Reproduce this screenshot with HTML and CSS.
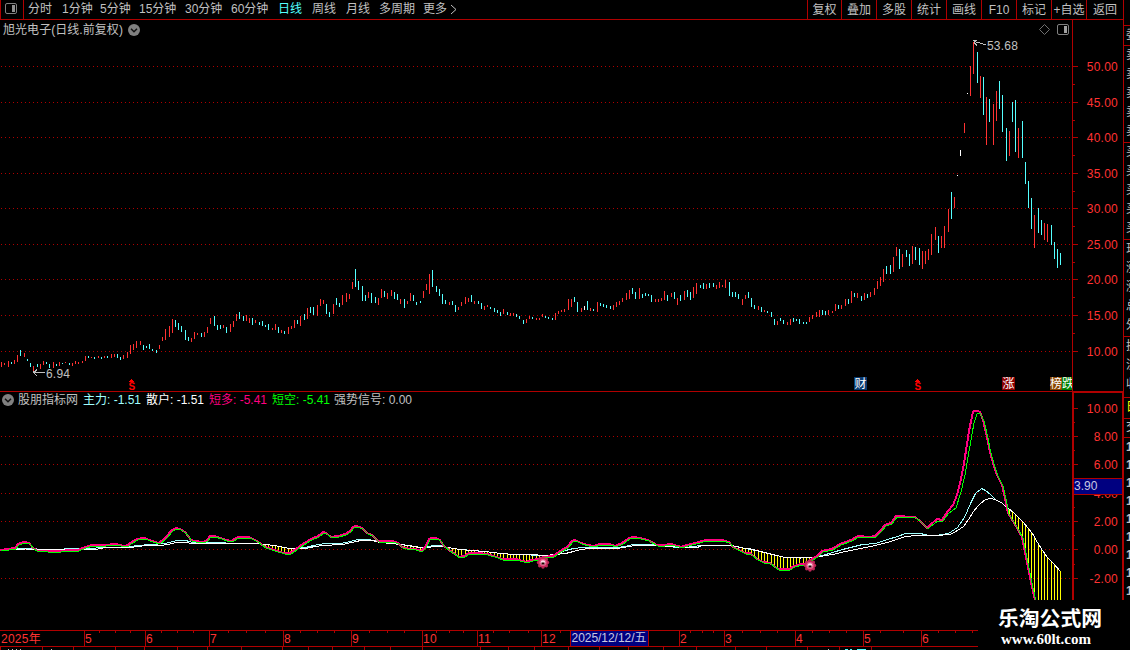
FILE: index.html
```html
<!DOCTYPE html>
<html lang="zh-CN">
<head>
  <meta charset="UTF-8">
  <title>旭光电子 日线</title>
  <link rel="stylesheet" href="styles.css">
</head>
<body>
  <header class="toolbar">
    <div class="panel-btn">
      <svg width="12" height="12" viewBox="0 0 12 12">
        <rect x="0.5" y="0.5" width="11" height="10" rx="1.5" fill="none" stroke="#808080"/>
        <rect x="7" y="2" width="3" height="7" fill="#909090"/>
      </svg>
    </div>
    <nav class="periods">
      <span>分时</span>
      <span>1分钟</span>
      <span>5分钟</span>
      <span>15分钟</span>
      <span>30分钟</span>
      <span>60分钟</span>
      <span class="active">日线</span>
      <span>周线</span>
      <span>月线</span>
      <span>多周期</span>
      <span>更多</span>
      <svg width="7" height="11" viewBox="0 0 7 11"><path d="M1 1l5 4.5-5 4.5" fill="none" stroke="#c0c0c0"/></svg>
    </nav>
    <div class="tools">
      <span>复权</span>
      <span>叠加</span>
      <span>多股</span>
      <span>统计</span>
      <span>画线</span>
      <span>F10</span>
      <span>标记</span>
      <span>+自选</span>
      <span>返回</span>
    </div>
  </header>

  <main class="workspace">
    <section class="charts">
      <div class="pane price">
        <div class="pane-head">
          <span class="stock">旭光电子(日线.前复权)</span>
          <svg class="drop" width="12" height="12" viewBox="0 0 12 12">
            <circle cx="6" cy="6" r="6" fill="#808080"/>
            <path d="M3 4.8l3 3 3-3" fill="none" stroke="#111" stroke-width="1.5"/>
          </svg>
          <svg class="corner" width="31" height="12" viewBox="0 0 31 12">
            <path d="M5.5 0.5l5 5-5 5-5-5z" fill="none" stroke="#707070"/>
            <rect x="18.5" y="0.5" width="11" height="10" rx="1.5" fill="none" stroke="#808080"/>
            <rect x="25" y="2" width="3" height="7" fill="#a0a0a0"/>
          </svg>
        </div>
        <svg class="plot" width="1072" height="351" viewBox="0 40 1072 351">
          <g id="priceGrid" class="grid"></g>
          <g id="candles"></g>
          <path class="arrow" d="M34 372.5H45M37 369.5l-3.5 3 3.5 3.5M33 371.5h3"/>
          <text class="note" x="46" y="378">6.94</text>
          <path class="arrow" d="M974 41.5l6 1.5 6 2M973 40.5h4M974 42l3 4"/>
          <text class="note" x="987" y="50">53.68</text>
          <g class="cash">
            <path d="M129 382l2.5-3 2.5 3z"/><text x="128.5" y="390">S</text>
            <path d="M915 382l2.5-3 2.5 3z"/><text x="914.5" y="390">S</text>
          </g>
          <g class="badge">
            <rect x="854" y="377" width="13" height="13" fill="#083a70"/><text x="854.5" y="388">财</text>
            <rect x="1002" y="377" width="13" height="13" fill="#8b0000"/><text x="1002.5" y="388">涨</text>
            <rect x="1050" y="377" width="12" height="13" fill="#8b4500"/><text x="1050" y="388">榜</text>
            <rect x="1062" y="377" width="10" height="13" fill="#008000"/><text x="1062" y="388">跌</text>
          </g>
        </svg>
      </div>

      <div class="pane indicator">
        <div class="pane-head">
          <svg class="drop" width="12" height="12" viewBox="0 0 12 12">
            <circle cx="6" cy="6" r="6" fill="#808080"/>
            <path d="M3 4.8l3 3 3-3" fill="none" stroke="#111" stroke-width="1.5"/>
          </svg>
          <span class="name">股朋指标网</span>
          <span class="val main">主力: -1.51</span>
          <span class="val retail">散户: -1.51</span>
          <span class="val long">短多: -5.41</span>
          <span class="val short">短空: -5.41</span>
          <span class="val signal">强势信号: 0.00</span>
        </div>
        <svg class="plot" width="1072" height="222" viewBox="0 408 1072 222">
          <defs>
            <g id="flower">
              <g fill="#c02858">
                <circle r="5"/>
                <circle cy="-4.5" r="1.7"/><circle cy="4.5" r="1.7"/>
                <circle cx="-4.5" r="1.7"/><circle cx="4.5" r="1.7"/>
                <circle cx="-3.3" cy="-3.3" r="1.7"/><circle cx="3.3" cy="-3.3" r="1.7"/>
                <circle cx="-3.3" cy="3.3" r="1.7"/><circle cx="3.3" cy="3.3" r="1.7"/>
              </g>
              <circle r="3.6" fill="#e85c8c"/>
              <circle r="2.3" fill="#ffe0ea"/>
              <rect x="-1.5" y="0" width="3" height="2" fill="#200"/>
            </g>
          </defs>
          <g id="subGrid" class="grid"></g>
          <g id="sticks"></g>
          <polyline id="mainLine" class="line" stroke="#a0ffff"/>
          <polyline id="retailLine" class="line" stroke="#fff"/>
          <polyline id="longLine" class="line" stroke="#ff0080" stroke-width="2"/>
          <polyline id="shortLine" class="line" stroke="#00ff00"/>
          <use href="#flower" x="543" y="562.5"/>
          <use href="#flower" x="810" y="565.5"/>
        </svg>
      </div>
    </section>

    <section class="scales">
      <svg id="priceScale" width="52" height="371" viewBox="1072 20 52 371">
        <path class="frame" d="M1072.5 20V391M1123.5 20V391"/>
      </svg>
      <svg id="subScale" width="52" height="239" viewBox="1072 391 52 239">
        <path class="frame thick" d="M1072 392H1124M1073 391V630M1123 391V630"/>
      </svg>
      <div class="cursor-value">3.90</div>
    </section>

    <aside class="quotes">
      <div class="q-head">委</div>
      <div class="q-rows">卖<br>卖<br>卖<br>卖<br>卖</div>
      <div class="q-rows">买<br>买<br>买<br>买<br>买</div>
      <div class="q-rows">现<br>涨<br>涨<br>总<br>外</div>
      <div class="q-info">换<br>流<br>收</div>
      <div class="q-tab">日</div>
      <div class="q-sub">交</div>
      <div class="q-ticks">1<br>1<br>1<br>1<br>1<br>1<br>1<br>1<br>1</div>
    </aside>
  </main>

  <footer class="timeline">
    <svg id="timeScale" width="978" height="20" viewBox="0 630 978 20">
      <path class="frame" d="M0 630.5H978M0 646.5H978"/>
    </svg>
  </footer>

  <div class="brand">
    <div class="brand-name">乐淘公式网</div>
    <div class="brand-url">www.60lt.com</div>
  </div>

  <script src="script.js"></script>
</body>
</html>
```
FILE: styles.css
```css
body {
  margin: 0;
  width: 1130px;
  height: 650px;
  overflow: hidden;
  position: relative;
  background: #000;
  color: #c0c0c0;
  font: 12px/16px "Liberation Sans", "Noto Sans CJK SC", sans-serif;
}

svg {
  display: block;
  shape-rendering: crispEdges;
}

.toolbar {
  display: flex;
  box-sizing: border-box;
  width: 1124px;
  height: 20px;
  border-bottom: 1px solid #b00000;
  border-right: 1px solid #b00000;
  line-height: 19px;
}

.toolbar svg,
.pane-head svg,
.plot use {
  shape-rendering: auto;
}

.panel-btn {
  box-sizing: border-box;
  width: 24px;
  padding: 3px 0 0 4px;
  border-left: 1px solid #b00000;
  border-right: 1px solid #b00000;
}

.periods {
  display: grid;
  grid-template-columns: 34px 38px 39px 46px 46px 47px 34px 34px 33px 44px 27px 10px;
  align-items: center;
  padding-left: 4px;
  white-space: nowrap;
}

.periods .active {
  color: #54ffff;
}

.tools {
  display: grid;
  grid-template-columns: 34px repeat(7, 35px) 37px;
  margin-left: auto;
  text-align: center;
  white-space: nowrap;
}

.tools span {
  height: 19px;
  border-left: 1px solid #b00000;
  line-height: 20px;
}

.workspace {
  display: grid;
  grid-template-columns: 1072px 52px 6px;
  height: 610px;
}

.pane-head {
  display: flex;
  align-items: center;
  white-space: nowrap;
}

.price .pane-head {
  height: 20px;
  padding: 0 2px 0 3px;
}

.stock {
  width: 125px;
  letter-spacing: 0.05px;
}

.corner {
  margin-left: auto;
}

.indicator .pane-head {
  box-sizing: border-box;
  height: 17px;
  padding-left: 2px;
  border-top: 1px solid #b00000;
}

.indicator .drop {
  margin-right: 4px;
}

.name {
  width: 65px;
}

.val {
  width: 63px;
}

.val.main { color: #a0ffff; }
.val.retail { color: #fff; }
.val.long { color: #ff0080; }
.val.short { color: #00ff00; width: 62px; }
.val.signal { width: 90px; }

.grid line {
  stroke: #b00000;
  stroke-dasharray: 1 3;
}

.line {
  fill: none;
}

.arrow {
  fill: none;
  stroke: #c0c0c0;
}

.note {
  fill: #c0c0c0;
  letter-spacing: 0.2px;
}

.cash path {
  fill: #f00;
}

.cash text {
  fill: #f00;
  font-size: 10px;
  font-weight: bold;
}

.badge text {
  fill: #fff;
  font-size: 12px;
}

.scales {
  position: relative;
}

.frame {
  fill: none;
  stroke: #b00000;
}

.thick {
  stroke-width: 2;
}

.scale-label {
  fill: #ff3232;
  letter-spacing: 0.25px;
}

.scale-label.right {
  text-anchor: end;
}

/* crosshair readout on top of the scale */
.cursor-value {
  position: absolute;
  left: 2px;
  top: 458px;
  width: 48px;
  height: 15px;
  border-top: 1px solid #b00000;
  border-bottom: 1px solid #b00000;
  background: #000080;
  color: #c8c8e0;
  line-height: 15px;
}

.quotes {
  overflow: hidden;
  height: 580px;
  padding-top: 5px;
  box-sizing: border-box;
  line-height: 19px;
}

.quotes div {
  box-sizing: border-box;
  width: 20px;
  padding-left: 2px;
  border-top: 1px solid #b00000;
}

.q-head { height: 20px; }
.q-rows { height: 97px; }
.q-info { height: 61px; }
.q-tab { height: 21px; color: #ffff00; }
.q-sub { height: 19px; line-height: 17px; }

.q-ticks {
  height: 163px;
  line-height: 18px;
  font-weight: bold;
}

.date-box {
  fill: #000080;
  stroke: #b00000;
}

.date-text {
  fill: #c8c8e0;
}

.brand {
  position: absolute;
  left: 978px;
  top: 600px;
  width: 152px;
  height: 50px;
  box-sizing: border-box;
  padding: 4px 0 0 20px;
  background: #000;
  color: #fff;
}

.brand-name {
  font: bold 20.8px/27px "Noto Sans CJK SC", sans-serif;
  white-space: nowrap;
}

.brand-url {
  padding-left: 3px;
  font: bold 15px/17px "Liberation Serif", serif;
}
```
FILE: script.js
```js
const NS = 'http://www.w3.org/2000/svg';

// x, high, low, colour (r up, c down, w flat)
const bars = `
1,362,367,r 4,363,365,r 8,361,367,r 11,362,364,c 14,360,364,r 17,355,362,r 20,350,356,c 24,353,357,r 27,359,361,c 30,363,367,c
33,366,371,r 37,364,367,c 40,364,369,r 43,361,365,r 46,362,364,c 49,364,368,c 53,362,368,r 56,364,366,c 59,362,366,r 62,363,364,c
65,362,363,r 69,363,365,c 72,363,366,r 75,361,364,r 78,362,364,r 82,361,363,r 85,356,361,r 88,356,358,c 91,357,358,r 94,357,359,c
98,356,358,r 101,357,359,c 104,356,358,r 107,356,358,c 111,354,358,r 114,354,357,r 117,354,358,c 120,357,360,c 123,355,359,r 127,352,358,r
130,345,354,r 133,344,350,r 136,341,348,r 140,341,345,r 143,345,350,c 146,346,348,c 149,344,349,c 152,349,351,c 156,350,353,c 159,345,349,r
162,337,341,r 165,329,340,r 169,326,337,r 172,319,333,r 175,320,327,c 178,323,330,c 181,326,332,c 185,330,340,c 188,337,341,c 191,338,342,r
194,332,339,r 197,333,335,r 201,333,337,c 204,332,337,r 207,327,333,r 210,318,324,r 214,316,326,c 217,325,330,c 220,325,329,c 223,325,328,r
226,327,333,c 230,324,332,r 233,321,327,r 236,314,321,r 239,312,319,c 243,316,321,c 246,315,321,r 249,318,323,r 252,318,325,c 255,320,323,r
259,322,325,c 262,321,326,c 265,325,327,c 268,324,330,c 272,328,330,r 275,324,330,r 278,327,333,c 281,330,333,r 284,331,334,c 288,327,334,r
291,326,329,r 294,320,328,r 297,320,324,c 300,316,326,r 304,314,320,c 307,308,319,r 310,307,313,c 313,307,315,c 317,305,316,r 320,299,306,r
323,300,304,r 326,304,314,c 329,312,317,c 333,304,314,r 336,298,305,c 339,303,307,c 342,295,305,r 346,293,302,r 349,294,299,r 352,282,289,r
355,269,287,c 358,281,290,c 362,286,301,c 365,295,301,c 368,292,298,r 371,293,303,c 375,297,303,c 378,298,305,r 381,289,298,r 384,291,297,c
387,293,299,r 391,290,296,r 394,292,299,c 397,294,300,c 400,299,304,r 404,299,308,c 407,301,304,r 410,293,301,r 413,295,301,c 416,302,305,c
420,301,303,c 423,291,298,r 426,284,290,r 429,274,294,r 432,270,287,c 436,286,292,c 439,289,296,c 442,294,304,c 445,300,304,c 449,302,305,r
452,301,305,c 455,305,312,c 458,307,310,r 461,302,306,r 465,297,304,r 468,298,302,r 471,295,302,c 474,301,304,r 478,301,304,c 481,303,309,c
484,306,310,r 487,305,307,r 490,307,309,c 494,308,312,c 497,310,313,c 500,312,316,c 503,309,314,r 507,312,315,c 510,313,316,r 513,313,316,r
516,314,317,c 519,316,319,c 523,320,324,c 526,319,323,r 529,316,319,r 532,317,319,c 536,318,320,r 539,318,320,r 542,314,317,r 545,316,318,c
548,317,319,c 552,318,320,c 555,313,320,r 558,311,314,r 561,310,312,r 564,309,312,r 568,299,310,r 571,299,307,r 574,297,302,c 577,302,312,c
581,308,312,r 584,306,310,w 587,301,310,c 590,308,311,r 593,309,311,c 597,302,312,r 600,303,306,c 603,304,307,c 606,305,308,c 610,306,309,c
613,305,310,r 616,302,307,r 619,301,305,r 622,298,302,r 626,293,300,r 629,290,299,r 632,288,294,c 635,292,299,c 639,288,299,r 642,294,298,c
645,293,296,c 648,294,296,c 651,295,302,c 655,299,302,r 658,299,302,r 661,298,301,r 664,291,300,r 667,295,301,c 671,293,297,r 674,292,299,c
677,298,305,r 680,295,301,c 684,291,300,r 687,290,297,c 690,292,300,c 693,287,298,r 696,283,294,r 700,285,288,c 703,283,289,c 706,284,289,r
709,283,288,c 713,283,287,c 716,285,289,r 719,282,288,r 722,285,287,r 725,280,288,r 729,282,296,c 732,292,297,c 735,292,297,c 738,294,299,c
742,299,305,r 745,295,299,r 748,292,298,c 751,298,307,c 754,305,309,c 758,306,310,r 761,307,312,c 764,310,312,r 767,311,313,c 771,312,317,c
774,319,325,c 777,321,325,r 780,318,321,c 783,320,324,c 787,322,325,r 790,319,325,r 793,318,322,c 796,319,321,c 799,319,324,c 803,322,324,c
806,322,324,c 809,317,322,r 812,315,319,r 816,312,317,r 819,310,317,r 822,310,315,c 825,311,315,c 828,310,315,r 832,311,313,r 835,304,311,r
838,305,309,c 841,305,309,r 845,299,306,r 848,299,304,c 851,291,303,r 854,293,297,c 857,293,298,r 861,296,301,c 864,293,300,r 867,294,298,c
870,292,297,r 874,288,295,r 877,281,289,r 880,277,286,r 883,269,282,r 886,266,274,c 890,265,274,c 893,257,272,r 896,247,256,r 899,249,269,c
902,254,267,r 906,250,257,c 909,254,266,c 912,246,264,r 915,247,260,c 919,248,265,c 922,251,269,r 925,251,264,r 928,249,260,r 931,234,255,r
935,227,240,r 938,236,253,c 941,236,248,r 944,226,248,r 948,209,232,r 951,192,219,c 954,197,208,r 957,175,176,w 960,150,156,w 964,123,133,r
967,93,94,w 970,66,96,r 973,42,74,r 977,52,83,c 980,76,98,r 983,77,115,c 986,97,145,r 989,99,122,c 993,104,145,r 996,91,121,r
999,81,109,c 1002,95,132,c 1006,128,161,c 1009,131,156,r 1012,102,122,c 1015,100,152,c 1018,128,158,r 1022,121,158,c 1025,162,184,c 1028,181,208,c
1031,198,229,c 1034,215,248,r 1038,208,233,c 1041,220,235,c 1044,223,240,r 1047,224,242,r 1051,225,245,c 1054,242,259,c 1057,249,268,c 1060,253,265,c
`.trim().split(/\s+/).map(b => b.split(','));

const head = `0,550 8,549 15,548 18,544 24,542 29,543 33,548 37,550.5 47,551 60,551 70,550 78,550 85,547 92,545 105,545 115,544 120,545 124,546 128,545 130,543 137,539 144,538
152,541 159,543 165,538 172,530 176,528 180,529 185,532 191,540 195,541 203,542 207,540 210,536 214,536 221,538 226,540 231,541 238,537 249,537 257,541 265,547
274,550 284,553 290,553 296,549 300,546 306,542 311,539 318,536 323,532 326,533 331,537 338,536 345,534 350,531 353,527 356,526 362,528 367,533 372,535 378,541
392,541 398,543 402,547 408,548.5 415,549 421,551 425,547 429,539 432,538 436,538 440,540 443,545 449,550 455,554 459,557 464,556 469,553 478,553 487,554 497,557 502,559
516,559 526,562 532,560 538,559 543,557 553,556 560,551 567,547 572,541 575,540 581,543 588,545 593,546 600,544 610,544 615,546 622,543 629,538 634,537 640,538
648,540 657,545 664,545 671,544 681,547 687,545 695,543 706,540 722,540 729,542 733,547 739,550 745,553 750,553 757,559 763,562 770,563 774,566 778,569 789,569
794,566 801,564 806,564 810,560 817,556 822,551 832,549 840,544 851,540 858,536 870,537 875,536 880,531 885,525 891,523 896,516 905,516.5 915,517 920,521 927,528`;
const fall = '983,420 987,437 989,448 993,463 997,475 1002,485 1005,498 1008,513 1011,518 1017,528 1022,537 1025,552 1028,567 1032,587 1035,600 1042,640 1064,700';

const longPts = parse(head + ' 930,525 937,519 942,520 948,511 953,505 957,495 961,479 964,463 967,444 969,431 973,411.5 978,411 980,412 ' + fall);
const shortPts = parse(head + ' 930,525 937,520 942,520 948,512 955,507 960,491 964,474 967,456 970,439 973,422 976,413 979,412 ' + fall);
const retailPts = parse(`0,548.5 15,549.5 25,548.5 50,549 75,549.5 95,549 103,547.5 130,547 145,545 160,545 167,544 176,542 200,543 258,543 264,544 274,545 284,547
292,548.5 305,548 312,546.5 322,545 342,544 351,542 358,540.5 372,540 380,542 390,543 400,544 408,545 420,547 428,547 433,546 442,546 447,547 460,549 470,550
485,551 500,553 515,554 530,554 545,555 555,554 565,553 573,551 580,549 590,548 617,548 628,546 635,545 655,545 670,546 685,547 697,547 700,545.5 730,545
736,546 745,548 750,548.5 760,551 768,553 776,555 785,557 800,557.5 812,557 820,556 832,554 845,551 860,548 875,545 890,541 905,536 917,535 935,535 950,534
957,530 963,526 968,519 973,511 977,506 980,503 985,499 991,498 997,500 1002,503 1008,508 1013,512 1018,517 1023,522 1027,527 1032,533 1037,542 1042,550
1047,557 1053,563 1060,571`);
const mainPts = parse(`0,549 15,549 20,547.5 28,547.5 40,549 88,548 103,547 113,547 130,546 137,545 150,544 165,543 172,541 177,540 187,540.5 192,542 258,543 264,544
274,545 284,547 292,548.5 305,547 313,545 325,543 340,543 350,541 357,539 367,539 380,541 400,544 420,547 425,547 432,545 440,545 447,547 460,549 485,551
500,553 515,554 545,555 555,554 565,550 573,548 583,547 617,547 625,546 632,544 653,544 660,546 685,547 700,545 730,545 745,548 760,551 776,555 785,557
812,557 817,556 822,555 832,552 842,549 850,547 862,544 875,543 887,539 897,536 905,533 920,533 928,535 935,535 948,533 957,527 964,517 970,503 975,493
981,488 985,490 990,494 996,500`);

function parse(s) {
  return s.trim().split(/\s+/).map(p => p.split(',').map(Number));
}

function add(parent, tag, attrs, text) {
  const el = document.createElementNS(NS, tag);
  for (const k in attrs) el.setAttribute(k, attrs[k]);
  if (text) el.textContent = text;
  document.getElementById(parent).appendChild(el);
}

function yAt(pts, x) {
  for (let i = 1; i < pts.length; i++) {
    if (x <= pts[i][0]) {
      const [x0, y0] = pts[i - 1];
      const [x1, y1] = pts[i];
      return y0 + (y1 - y0) * (x - x0) / (x1 - x0);
    }
  }
  return pts[pts.length - 1][1];
}

function plot(id, pts, dx, dy) {
  document.getElementById(id).setAttribute('points', pts.map(p => (p[0] + dx) + ',' + (p[1] + dy)).join(' '));
}

const colors = { r: '#ff3232', c: '#54ffff', w: '#ffffff' };
bars.forEach(([x, top, bottom, c]) => {
  add('candles', 'rect', { x, y: top, width: 1, height: bottom - top, fill: colors[c] });
});

// bars where the fast line is below the slow one
bars.forEach(b => {
  const x = Number(b[0]);
  const y0 = Math.round(yAt(retailPts, x));
  const y1 = Math.min(Math.round(yAt(longPts, x)), 600);
  if (y1 > y0) add('sticks', 'rect', { x, y: y0, width: 1, height: y1 - y0, fill: '#ffff00' });
});

plot('mainLine', mainPts, 0.5, 0.5);
plot('retailLine', retailPts, 0.5, 0.5);
plot('longLine', longPts, 0, 0);
plot('shortLine', shortPts, 1, 1);

function scale(grid, target, ys, minor, start, step) {
  ys.forEach((y, i) => {
    if (y !== 408) add(grid, 'line', { x1: 1, x2: 1072, y1: y + 0.5, y2: y + 0.5 });
    add(target, 'rect', { x: 1073, y, width: 5, height: 1, fill: '#b00000' });
    add(target, 'text', { x: 1118, y: y + 5, class: 'scale-label right' }, (start - i * step).toFixed(2));
  });
  minor.forEach(y => add(target, 'rect', { x: 1073, y, width: 2, height: 1, fill: '#b00000' }));
}
scale('priceGrid', 'priceScale', [66, 102, 137, 173, 208, 244, 279, 315, 351], [84, 120, 155, 191, 226, 262, 297, 333], 50, 5);
scale('subGrid', 'subScale', [408, 436, 464, 493, 521, 549, 578], [422, 450, 507, 535, 564], 10, 2);

const months = [[0, '2025年'], [84, '5'], [145, '6'], [209, '7'], [283, '8'], [351, '9'], [422, '10'], [477, '11'], [541, '12'],
  [679, '2'], [724, '3'], [795, '4'], [863, '5'], [921, '6']];
months.forEach(([x, label]) => {
  if (x) add('timeScale', 'rect', { x, y: 630, width: 1, height: 17, fill: '#b00000' });
  add('timeScale', 'text', { x: x + 1, y: 643, class: 'scale-label' }, label);
});
[99, 115, 130, 161, 177, 193, 228, 246, 265, 300, 317, 334, 369, 387, 404, 436, 449, 463, 493, 509, 528, 560, 690, 702, 713,
  742, 760, 777, 812, 829, 846, 880, 903, 938, 955, 972].forEach(x => add('timeScale', 'rect', { x, y: 631, width: 1, height: 2, fill: '#b00000' }));
[0, 42, 73, 115, 144, 177, 207, 241, 282, 308, 332, 364, 390, 422, 480, 508, 534, 568, 599, 628, 663, 696, 735, 766, 807, 839,
  871].forEach(x => add('timeScale', 'rect', { x, y: 647, width: 1, height: 3, fill: '#b00000' }));
add('timeScale', 'rect', { x: 570.5, y: 630.5, width: 78, height: 16, class: 'date-box' });
add('timeScale', 'text', { x: 571.5, y: 642, class: 'date-text', textLength: 75 }, '2025/12/12/五');

// tops of the next text row
[[8, 1], [12, 1], [16, 1], [20, 1], [51, 1], [828, 1]].forEach(([x, w]) => add('timeScale', 'rect', { x, y: 649, width: w, height: 1, fill: '#c0c0c0' }));
[[845, 3], [850, 2], [857, 9]].forEach(([x, w]) => add('timeScale', 'rect', { x, y: 649, width: w, height: 1, fill: '#54ffff' }));
```
